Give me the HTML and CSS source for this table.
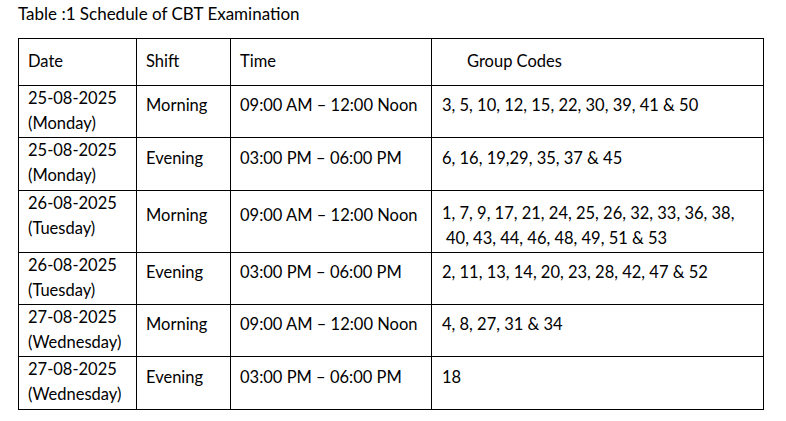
FILE: index.html
```html
<!DOCTYPE html>
<html>
<head>
<meta charset="utf-8">
<link rel="stylesheet" href="styles.css">
</head>
<body>
<div class="page">
  <p class="caption">Table :1 Schedule of CBT Examination</p>
  <table class="schedule">
    <colgroup>
      <col class="c-date"><col class="c-shift"><col class="c-time"><col class="c-codes">
    </colgroup>
    <tr class="head">
      <th>Date</th><th>Shift</th><th>Time</th><th class="codes-head">Group Codes</th>
    </tr>
    <tr class="r52">
      <td class="date">25-08-2025<br>(Monday)</td>
      <td class="mid">Morning</td>
      <td class="mid">09:00 AM – 12:00 Noon</td>
      <td class="mid codes">3, 5, 10, 12, 15, 22, 30, 39, 41 &amp; 50</td>
    </tr>
    <tr class="r53">
      <td class="date">25-08-2025<br>(Monday)</td>
      <td class="mid">Evening</td>
      <td class="mid">03:00 PM – 06:00 PM</td>
      <td class="mid codes">6, 16, 19,29, 35, 37 &amp; 45</td>
    </tr>
    <tr class="r62">
      <td class="date">26-08-2025<br>(Tuesday)</td>
      <td class="mid">Morning</td>
      <td class="mid">09:00 AM – 12:00 Noon</td>
      <td class="codes multi">1, 7, 9, 17, 21, 24, 25, 26, 32, 33, 36, 38,<br><span class="indent">40, 43, 44, 46, 48, 49, 51 &amp; 53</span></td>
    </tr>
    <tr class="r52">
      <td class="date">26-08-2025<br>(Tuesday)</td>
      <td class="mid">Evening</td>
      <td class="mid">03:00 PM – 06:00 PM</td>
      <td class="mid codes">2, 11, 13, 14, 20, 23, 28, 42, 47 &amp; 52</td>
    </tr>
    <tr class="r52">
      <td class="date">27-08-2025<br>(Wednesday)</td>
      <td class="mid">Morning</td>
      <td class="mid">09:00 AM – 12:00 Noon</td>
      <td class="mid codes">4, 8, 27, 31 &amp; 34</td>
    </tr>
    <tr class="r53">
      <td class="date">27-08-2025<br>(Wednesday)</td>
      <td class="mid">Evening</td>
      <td class="mid">03:00 PM – 06:00 PM</td>
      <td class="mid codes">18</td>
    </tr>
  </table>
</div>
</body>
</html>
```

FILE: styles.css
```css
html, body {
  margin: 0;
  padding: 0;
  background: #ffffff;
}

body {
  font-family: Lato, "Open Sans", sans-serif;
  font-size: 16.5px;
  color: #000000;
}

.page {
  padding: 1px 0 0 18px;
}

.caption {
  margin: 0 0 12px 0;
  line-height: 25px;
  font-size: 17px;
}

.schedule {
  border-collapse: collapse;
  table-layout: fixed;
  width: 745px;
}

.c-date { width: 118px; }
.c-shift { width: 94px; }
.c-time { width: 201px; }
.c-codes { width: 332px; }

.schedule th,
.schedule td {
  border: 1px solid #000000;
  padding: 0 0 0 9px;
  line-height: 25px;
  text-align: left;
  font-weight: normal;
  white-space: nowrap;
}

.head { height: 47px; }
.r52 { height: 52px; }
.r53 { height: 53px; }
.r62 { height: 62px; }

.head th {
  vertical-align: top;
  padding-top: 10px;
}

.schedule th.codes-head {
  padding-left: 35px;
}

.schedule td.date {
  vertical-align: top;
  padding-top: 0;
}

.schedule td.mid {
  vertical-align: middle;
  padding-bottom: 12px;
}

.schedule td.codes {
  padding-left: 10px;
}

.schedule td.multi {
  vertical-align: top;
  padding-top: 10px;
}

.indent {
  padding-left: 4px;
}
```
